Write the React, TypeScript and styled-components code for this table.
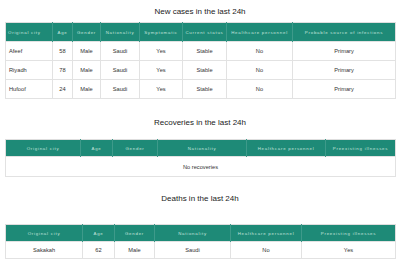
import React from "react";
import styled, { createGlobalStyle } from "styled-components";

const Global = createGlobalStyle`
  html, body { margin: 0; padding: 0; background: #ffffff; }
  body { font-family: "Liberation Sans", Arial, sans-serif; color: #333; }
`;

const Page = styled.div`
  width: 400px;
  padding: 0 5px;
  box-sizing: border-box;
  display: flex;
  flex-direction: column;
`;

const Title = styled.h2<{ $top: number; $bottom: number }>`
  margin: ${(p) => p.$top}px 0 ${(p) => p.$bottom}px;
  height: 12px;
  line-height: 12px;
  font-size: 8px;
  font-weight: normal;
  text-align: center;
  color: #222;
`;

const Table = styled.table`
  width: 390px;
  border-collapse: collapse;
  table-layout: fixed;
  border: 1px solid #dedede;
`;

const Th = styled.th<{ $h: number; $align?: string }>`
  height: ${(p) => p.$h}px;
  padding: 0 2px;
  background: #1e8a77;
  color: #c4e3dc;
  font-size: 4.4px;
  font-weight: normal;
  letter-spacing: 0.75px;
  text-align: ${(p) => p.$align || "center"};
  border-left: 1px solid #3e9a8a;
  white-space: nowrap;
  overflow: hidden;
  &:first-child { border-left: none; }
`;

const Td = styled.td<{ $h: number; $align?: string }>`
  height: ${(p) => p.$h}px;
  padding: 0 3px;
  font-size: 5.7px;
  color: #333;
  text-align: ${(p) => p.$align || "center"};
  border: 1px solid #e2e2e2;
  white-space: nowrap;
  overflow: hidden;
`;

type Col = { label: string; w: number; align?: string };

const newCols: Col[] = [
  { label: "Original city", w: 47, align: "left" },
  { label: "Age", w: 20 },
  { label: "Gender", w: 28 },
  { label: "Nationality", w: 39 },
  { label: "Symptomatic", w: 43 },
  { label: "Current status", w: 44 },
  { label: "Healthcare personnel", w: 66 },
  { label: "Probable source of infections", w: 103 },
];

const newRows = [
  ["Afeef", "58", "Male", "Saudi", "Yes", "Stable", "No", "Primary"],
  ["Riyadh", "78", "Male", "Saudi", "Yes", "Stable", "No", "Primary"],
  ["Hufoof", "24", "Male", "Saudi", "Yes", "Stable", "No", "Primary"],
];

const recCols: Col[] = [
  { label: "Original city", w: 75 },
  { label: "Age", w: 32 },
  { label: "Gender", w: 45 },
  { label: "Nationality", w: 89 },
  { label: "Healthcare personnel", w: 79 },
  { label: "Preexisting illnesses", w: 70 },
];

const deathCols: Col[] = [
  { label: "Original city", w: 77 },
  { label: "Age", w: 32 },
  { label: "Gender", w: 40 },
  { label: "Nationality", w: 76 },
  { label: "Healthcare personnel", w: 71 },
  { label: "Preexisting illnesses", w: 94 },
];

const deathRows = [["Sakakah", "62", "Male", "Saudi", "No", "Yes"]];

function Head({ cols, h }: { cols: Col[]; h: number }) {
  return (
    <>
      <colgroup>
        {cols.map((c) => (
          <col key={c.label} style={{ width: c.w }} />
        ))}
      </colgroup>
      <thead>
        <tr>
          {cols.map((c) => (
            <Th key={c.label} $h={h} $align={c.align}>
              {c.label}
            </Th>
          ))}
        </tr>
      </thead>
    </>
  );
}

export default function App() {
  return (
    <Page>
      <Global />
      <Title $top={6} $bottom={4}>New cases in the last 24h</Title>
      <Table>
        <Head cols={newCols} h={18} />
        <tbody>
          {newRows.map((r, i) => (
            <tr key={i}>
              {r.map((v, j) => (
                <Td key={j} $h={18} $align={j === 0 ? "left" : "center"}>
                  {v}
                </Td>
              ))}
            </tr>
          ))}
        </tbody>
      </Table>

      <Title $top={18} $bottom={10}>Recoveries in the last 24h</Title>
      <Table>
        <Head cols={recCols} h={16} />
        <tbody>
          <tr>
            <Td $h={19} colSpan={6}>No recoveries</Td>
          </tr>
        </tbody>
      </Table>

      <Title $top={16} $bottom={19}>Deaths in the last 24h</Title>
      <Table>
        <Head cols={deathCols} h={16} />
        <tbody>
          {deathRows.map((r, i) => (
            <tr key={i}>
              {r.map((v, j) => (
                <Td key={j} $h={16}>
                  {v}
                </Td>
              ))}
            </tr>
          ))}
        </tbody>
      </Table>
    </Page>
  );
}
